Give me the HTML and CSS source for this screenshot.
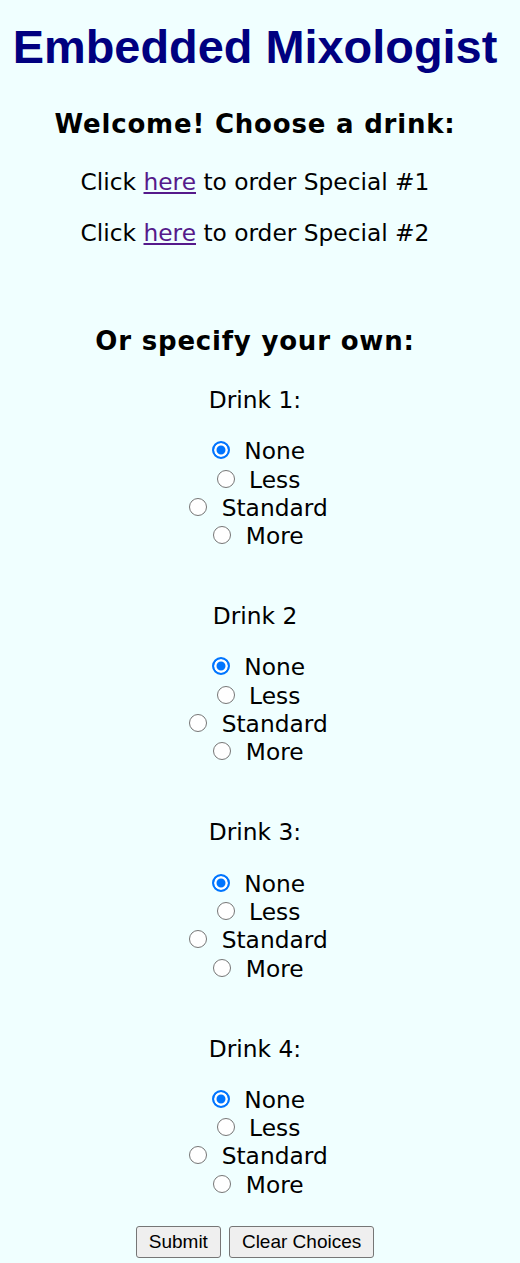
FILE: index.html
```html
<!DOCTYPE html>
<html lang="en">
<head>
<meta charset="utf-8">
<title>Embedded Mixologist</title>
<link rel="stylesheet" href="styles.css">
</head>
<body>
<main class="page">
  <h1 class="title">Embedded Mixologist</h1>
  <h2 class="heading heading-welcome">Welcome! Choose a drink:</h2>
  <p class="special special-1">Click <a class="link" href="#">here</a> to order Special #1</p>
  <p class="special special-2">Click <a class="link" href="#">here</a> to order Special #2</p>
  <h2 class="heading heading-own">Or specify your own:</h2>
  <form class="order">
    <div class="drink">
      <p class="drink-name">Drink 1:</p>
      <div class="options">
        <label class="option"><input class="radio" type="radio" name="d1" checked> None</label>
        <label class="option"><input class="radio" type="radio" name="d1"> Less</label>
        <label class="option"><input class="radio" type="radio" name="d1"> Standard</label>
        <label class="option"><input class="radio" type="radio" name="d1"> More</label>
      </div>
    </div>
    <div class="drink">
      <p class="drink-name">Drink 2</p>
      <div class="options">
        <label class="option"><input class="radio" type="radio" name="d2" checked> None</label>
        <label class="option"><input class="radio" type="radio" name="d2"> Less</label>
        <label class="option"><input class="radio" type="radio" name="d2"> Standard</label>
        <label class="option"><input class="radio" type="radio" name="d2"> More</label>
      </div>
    </div>
    <div class="drink">
      <p class="drink-name">Drink 3:</p>
      <div class="options">
        <label class="option"><input class="radio" type="radio" name="d3" checked> None</label>
        <label class="option"><input class="radio" type="radio" name="d3"> Less</label>
        <label class="option"><input class="radio" type="radio" name="d3"> Standard</label>
        <label class="option"><input class="radio" type="radio" name="d3"> More</label>
      </div>
    </div>
    <div class="drink">
      <p class="drink-name">Drink 4:</p>
      <div class="options">
        <label class="option"><input class="radio" type="radio" name="d4" checked> None</label>
        <label class="option"><input class="radio" type="radio" name="d4"> Less</label>
        <label class="option"><input class="radio" type="radio" name="d4"> Standard</label>
        <label class="option"><input class="radio" type="radio" name="d4"> More</label>
      </div>
    </div>
    <div class="actions">
      <button class="button" type="submit">Submit</button>
      <button class="button" type="reset">Clear Choices</button>
    </div>
  </form>
</main>
</body>
</html>
```
FILE: styles.css
```css
html, body {
  margin: 0;
  background: #f0ffff;
}
body {
  font-family: "DejaVu Sans", Verdana, sans-serif;
  font-size: 23.3px;
  line-height: 28.3px;
  color: #000;
}
.page {
  padding: 0 18px 0 8px;
  text-align: center;
}
.title {
  font-family: "Liberation Sans", Arial, sans-serif;
  font-weight: bold;
  font-size: 46.9px;
  line-height: 53px;
  color: #000080;
  margin: 21px 0 0;
}
.heading {
  font-size: 26px;
  line-height: 30px;
  letter-spacing: 0.8px;
  font-weight: bold;
  margin: 0;
}
.heading-welcome { margin-top: 35.3px; }
.special { margin: 0; }
.special-1 { margin-top: 28.6px; }
.special-2 { margin-top: 22.7px; }
.heading-own { margin-top: 78.4px; }
.link { color: #551a8b; text-decoration: underline; }
.order { margin-top: 30.45px; }
.drink + .drink { margin-top: 51.7px; }
.drink-name { margin: 0; }
.options { margin-top: 23px; }
.option { display: block; }
.radio {
  appearance: none;
  -webkit-appearance: none;
  box-sizing: border-box;
  width: 18px;
  height: 18px;
  margin: 0 7px 0 7px;
  border: 1px solid #767676;
  border-radius: 50%;
  background: #fff;
  vertical-align: baseline;
}
.radio:checked {
  border: 2px solid #0075ff;
  background: #0075ff;
  box-shadow: inset 0 0 0 2.5px #fff;
}
.actions {
  margin-top: 27px;
  display: flex;
  justify-content: center;
  gap: 8px;
}
.button {
  font-family: "Liberation Sans", Arial, sans-serif;
  font-size: 19px;
  height: 32px;
  padding: 0 12px;
  border: 1px solid #767676;
  border-radius: 3px;
  background: #efefef;
  color: #000;
}
```
